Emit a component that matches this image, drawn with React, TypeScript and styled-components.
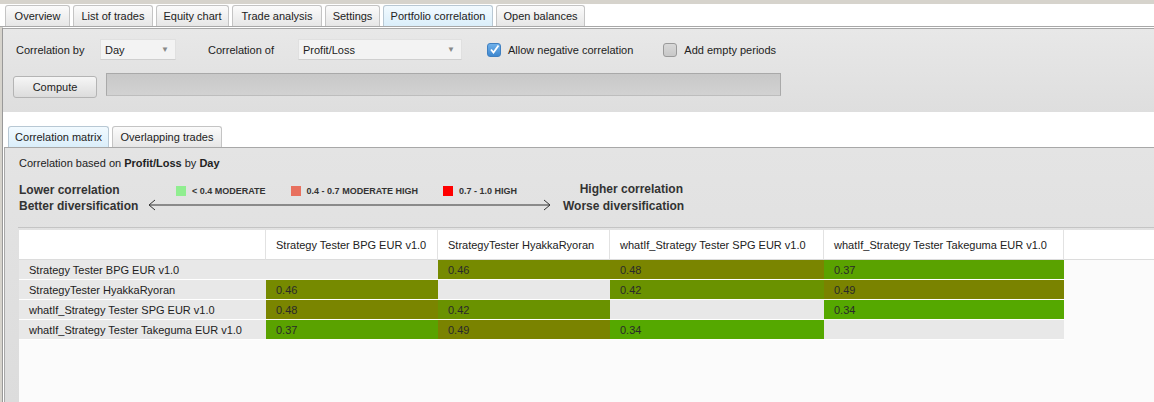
import styled, { createGlobalStyle } from "styled-components";

const GlobalStyle = createGlobalStyle`
  html, body, #root {
    margin: 0;
    padding: 0;
    height: 100%;
  }
  body {
    font-family: "Liberation Sans", Arial, sans-serif;
    font-size: 11px;
    color: #222;
    background: #d6d3cc;
  }
`;

const mainTabs = [
  { label: "Overview", width: 65 },
  { label: "List of trades", width: 80 },
  { label: "Equity chart", width: 73 },
  { label: "Trade analysis", width: 90 },
  { label: "Settings", width: 55 },
  { label: "Portfolio correlation", width: 110 },
  { label: "Open balances", width: 89 },
];

const strategies = [
  "Strategy Tester BPG EUR v1.0",
  "StrategyTester HyakkaRyoran",
  "whatIf_Strategy Tester SPG EUR v1.0",
  "whatIf_Strategy Tester Takeguma EUR v1.0",
];

const columnWidths = [247, 172, 172, 214, 240];

const matrix: (number | null)[][] = [
  [null, 0.46, 0.48, 0.37],
  [0.46, null, 0.42, 0.49],
  [0.48, 0.42, null, 0.34],
  [0.37, 0.49, 0.34, null],
];

const cellColors: Record<string, string> = {
  "0.34": "#55a800",
  "0.37": "#5aa200",
  "0.42": "#6a9200",
  "0.46": "#768a00",
  "0.48": "#7a8500",
  "0.49": "#7a8300",
};

const legend = [
  { label: "< 0.4 MODERATE", color: "#90ee90" },
  { label: "0.4 - 0.7 MODERATE HIGH", color: "#e8705e" },
  { label: "0.7 - 1.0 HIGH", color: "#ff0000" },
];

export default function App() {
  return (
    <>
      <GlobalStyle />
      <Page>
        <TabBar>
          {mainTabs.map((t) => (
            <Tab
              key={t.label}
              $width={t.width}
              $active={t.label === "Portfolio correlation"}
            >
              {t.label}
            </Tab>
          ))}
        </TabBar>
        <Frame>
          <ControlsPanel>
            <ControlRow>
              <FieldLabel $width={84} $gap={3}>
                Correlation by
              </FieldLabel>
              <Select $width={76}>
                <span>Day</span>
                <Caret>▼</Caret>
              </Select>
              <FieldLabel $width={90} $gap={32}>
                Correlation of
              </FieldLabel>
              <Select $width={164}>
                <span>Profit/Loss</span>
                <Caret>▼</Caret>
              </Select>
              <CheckLabel $gap={25}>
                <CheckBox $checked>
                  <svg width="11" height="11" viewBox="0 0 11 11">
                    <path
                      d="M2 5.5 L4.5 8.5 L9.5 1.5"
                      fill="none"
                      stroke="#fff"
                      strokeWidth="1.8"
                    />
                  </svg>
                </CheckBox>
                Allow negative correlation
              </CheckLabel>
              <CheckLabel $gap={30}>
                <CheckBox />
                Add empty periods
              </CheckLabel>
            </ControlRow>
            <ControlRow>
              <Button>Compute</Button>
              <Progress />
            </ControlRow>
          </ControlsPanel>
          <Spacer />
          <SubTabBar>
            <Tab $width={101} $active>
              Correlation matrix
            </Tab>
            <Tab $width={110}>Overlapping trades</Tab>
          </SubTabBar>
          <MatrixPanel>
            <Caption>
              Correlation based on <b>Profit/Loss</b> by <b>Day</b>
            </Caption>
            <Legend>
              <SideText>
                <div>Lower correlation</div>
                <div>Better diversification</div>
              </SideText>
              <LegendMiddle>
                <LegendItems>
                  {legend.map((l) => (
                    <LegendItem key={l.label}>
                      <Swatch $color={l.color} />
                      {l.label}
                    </LegendItem>
                  ))}
                </LegendItems>
                <svg width="403" height="12" viewBox="0 0 403 12">
                  <path
                    d="M1 6 H402 M7 1 L1 6 L7 11 M396 1 L402 6 L396 11"
                    fill="none"
                    stroke="#333"
                    strokeWidth="1"
                  />
                </svg>
              </LegendMiddle>
              <SideText $right>
                <div>Higher correlation</div>
                <div>Worse diversification</div>
              </SideText>
            </Legend>
            <Divider />
            <TableArea>
              <Table>
                <colgroup>
                  {columnWidths.map((w, i) => (
                    <col key={i} style={{ width: w }} />
                  ))}
                  <col />
                </colgroup>
                <thead>
                  <tr>
                    <HeadCell />
                    {strategies.map((s) => (
                      <HeadCell key={s}>{s}</HeadCell>
                    ))}
                    <HeadCell $blank />
                  </tr>
                </thead>
                <tbody>
                  {strategies.map((s, r) => (
                    <tr key={s}>
                      <RowLabel>{s}</RowLabel>
                      {matrix[r].map((v, c) => (
                        <Cell
                          key={c}
                          $bg={v === null ? "#e8e8e8" : cellColors[v.toFixed(2)]}
                        >
                          {v === null ? "" : v.toFixed(2)}
                        </Cell>
                      ))}
                      <EmptyCell />
                    </tr>
                  ))}
                </tbody>
              </Table>
            </TableArea>
          </MatrixPanel>
        </Frame>
      </Page>
    </>
  );
}

const Page = styled.div`
  height: 100%;
  display: flex;
  flex-direction: column;
  padding-top: 4px;
  box-sizing: border-box;
  overflow: hidden;
`;

const TabBar = styled.div`
  display: flex;
  gap: 3px;
  padding: 1px 0 0 5px;
  background: #fff;
  border-bottom: 1px solid #a8a8a8;
  height: 23px;
  box-sizing: border-box;
`;

const Tab = styled.div<{ $active?: boolean; $width: number }>`
  width: ${(p) => p.$width}px;
  box-sizing: border-box;
  display: flex;
  align-items: center;
  justify-content: center;
  border: 1px solid ${(p) => (p.$active ? "#b8c8d4" : "#c4c4c4")};
  border-bottom: none;
  border-radius: 3px 3px 0 0;
  background: ${(p) =>
    p.$active
      ? "linear-gradient(#f2faff, #daeefa)"
      : "linear-gradient(#fbfbfb, #e6e6e6)"};
  color: #222;
  white-space: nowrap;
`;

const Frame = styled.div`
  flex: 1;
  display: flex;
  flex-direction: column;
  margin-left: 2px;
  border-left: 1px solid #999;
  border-top: 1px solid #fff;
  background: #fff;
`;

const ControlsPanel = styled.div`
  border-top: 1px solid #a8a8a8;
  background: linear-gradient(#e8e8e8, #dedede);
  padding: 10px 0 14px 10px;
  display: flex;
  flex-direction: column;
  gap: 13px;
`;

const ControlRow = styled.div`
  display: flex;
  align-items: center;
`;

const FieldLabel = styled.span<{ $gap: number; $width: number }>`
  width: ${(p) => p.$width}px;
  margin-left: ${(p) => p.$gap}px;
  white-space: nowrap;
`;

const Select = styled.div<{ $width: number }>`
  width: ${(p) => p.$width}px;
  height: 21px;
  box-sizing: border-box;
  display: flex;
  align-items: center;
  justify-content: space-between;
  padding: 0 6px 0 4px;
  background: #f3f3f3;
  border: 1px solid #e0e0e0;
  border-bottom-color: #cfcfcf;
`;

const Caret = styled.span`
  font-size: 8px;
  color: #888;
`;

const CheckLabel = styled.label<{ $gap: number }>`
  display: flex;
  align-items: center;
  gap: 7px;
  margin-left: ${(p) => p.$gap}px;
  white-space: nowrap;
`;

const CheckBox = styled.span<{ $checked?: boolean }>`
  width: 14px;
  height: 14px;
  box-sizing: border-box;
  border-radius: 3px;
  display: flex;
  align-items: center;
  justify-content: center;
  border: 1px solid ${(p) => (p.$checked ? "#3f7fc0" : "#9a9a9a")};
  background: ${(p) =>
    p.$checked
      ? "linear-gradient(#6fb0ea, #3d87cf)"
      : "linear-gradient(#d8d8d8, #c8c8c8)"};
`;

const Button = styled.div`
  width: 84px;
  height: 22px;
  margin-top: 3px;
  box-sizing: border-box;
  display: flex;
  align-items: center;
  justify-content: center;
  border: 1px solid #b4b4b4;
  border-radius: 3px;
  background: linear-gradient(#f6f6f6, #dcdcdc);
  color: #222;
`;

const Progress = styled.div`
  width: 675px;
  height: 23px;
  margin: 0 0 2px 9px;
  box-sizing: border-box;
  background: linear-gradient(#c8c8c8, #d2d2d2);
  border: 1px solid #a9a9a9;
  border-bottom-color: #bdbdbd;
`;

const Spacer = styled.div`
  height: 14px;
  background: #fff;
`;

const SubTabBar = styled.div`
  display: flex;
  gap: 3px;
  padding-left: 5px;
  height: 21px;
  background: #fff;
`;

const MatrixPanel = styled.div`
  flex: 1;
  display: flex;
  flex-direction: column;
  margin-left: 1px;
  border-left: 1px solid #a8a8a8;
  border-top: 1px solid #a8a8a8;
  background: linear-gradient(#e4e4e4, #dcdcdc);
  padding-left: 14px;
`;

const Caption = styled.div`
  padding-top: 8px;
  line-height: 14px;
  color: #222;
  b {
    font-weight: bold;
  }
`;

const Legend = styled.div`
  display: flex;
  align-items: flex-start;
  margin-top: 12px;
  height: 32px;
`;

const SideText = styled.div<{ $right?: boolean }>`
  width: ${(p) => (p.$right ? 120 : 129)}px;
  font-size: 12px;
  font-weight: bold;
  color: #333;
  line-height: ${(p) => (p.$right ? 17 : 16)}px;
  text-align: ${(p) => (p.$right ? "right" : "left")};
  white-space: nowrap;
  margin-top: ${(p) => (p.$right ? -1 : 0)}px;
`;

const LegendMiddle = styled.div`
  display: flex;
  flex-direction: column;
  margin: 2px 12px 0 0;
`;

const LegendItems = styled.div`
  display: flex;
  gap: 25px;
  padding-left: 28px;
  height: 14px;
  margin-bottom: 1px;
`;

const LegendItem = styled.div`
  display: flex;
  align-items: center;
  gap: 6px;
  font-size: 9px;
  font-weight: bold;
  color: #333;
  white-space: nowrap;
`;

const Swatch = styled.span<{ $color: string }>`
  width: 10px;
  height: 10px;
  background: ${(p) => p.$color};
`;

const Divider = styled.div`
  height: 1px;
  background: #c4c4c4;
  margin: 13px 0 2px -1px;
`;

const TableArea = styled.div`
  flex: 1;
  background: #fbfbfb;
`;

const Table = styled.table`
  border-collapse: separate;
  border-spacing: 0;
  table-layout: fixed;
  width: 100%;
  font-size: 11px;
`;

const HeadCell = styled.th<{ $blank?: boolean }>`
  height: 29px;
  padding: 0 0 0 10px;
  text-align: left;
  font-weight: normal;
  color: #222;
  background: #fff;
  border-right: ${(p) => (p.$blank ? "none" : "1px solid #e2e2e2")};
  border-bottom: 1px solid #dcdcdc;
  white-space: nowrap;
`;

const RowLabel = styled.td`
  height: 19px;
  padding: 0 0 0 10px;
  background: #e8e8e8;
  border-bottom: 1px solid #fff;
  color: #222;
  white-space: nowrap;
`;

const Cell = styled.td<{ $bg: string }>`
  height: 19px;
  padding: 0 0 0 10px;
  background: ${(p) => p.$bg};
  border-bottom: 1px solid #fff;
  color: #2a2a2a;
`;

const EmptyCell = styled.td`
  background: #fbfbfb;
`;
